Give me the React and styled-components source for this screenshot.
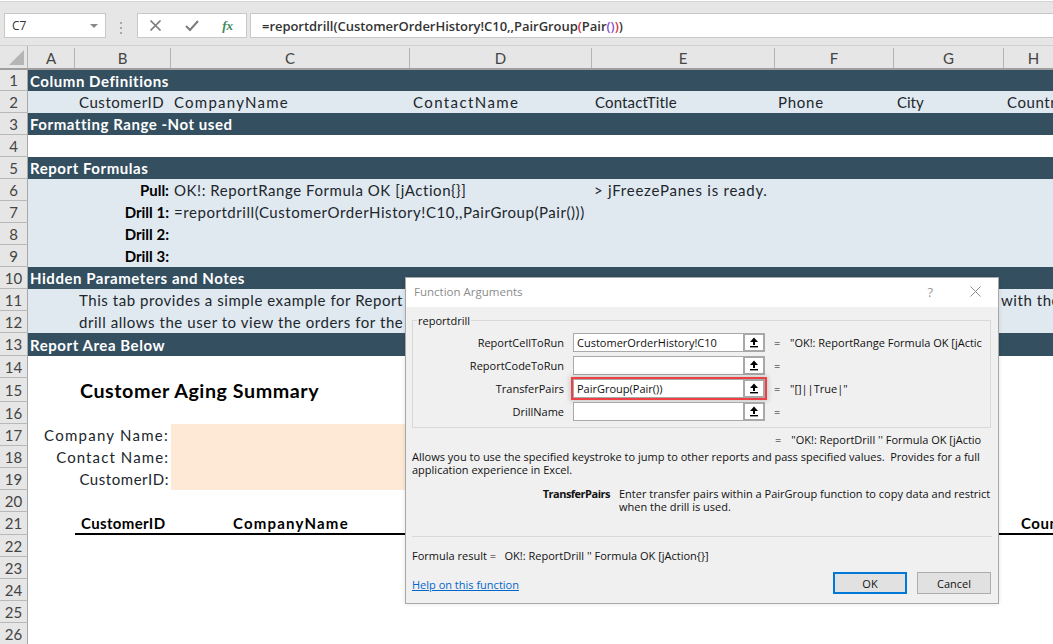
import React from 'react'
import styled, { createGlobalStyle } from 'styled-components'

const GlobalStyle = createGlobalStyle`
  html, body {
    margin: 0;
    height: 100%;
    overflow: hidden;
    background: #fff;
  }
`

const SHEET_FONT = `Lato, "Open Sans", sans-serif`
const UI_FONT = `"Open Sans", "Noto Sans", sans-serif`
const COLUMNS = '28px 47px 96px 239px 182px 183px 119px 110px 60px'

const Page = styled.div`
  position: relative;
  width: 1053px;
  height: 644px;
  overflow: hidden;
  background: #fff;
`

/* formula bar */
const Toolbar = styled.div`
  height: 45px;
  box-sizing: border-box;
  padding: 11px 0 0 4px;
  display: flex;
  align-items: flex-start;
  background: #e6e6e6;
  border-top: 1px solid #d4d4d4;
  margin-top: 1px;
  border-bottom: 1px solid #d0d0d0;
`
const NameBox = styled.div`
  width: 102px;
  height: 25px;
  box-sizing: border-box;
  padding: 0 7px;
  display: flex;
  align-items: center;
  justify-content: space-between;
  background: #fff;
  border: 1px solid #c8c8c8;
  font: 12px ${UI_FONT};
  color: #333;
`
const Caret = styled.span`
  width: 0;
  height: 0;
  border-left: 4px solid transparent;
  border-right: 4px solid transparent;
  border-top: 4px solid #888;
`
const Grip = styled.div`
  width: 3px;
  margin: 9px 14px 0 14px;
  display: flex;
  flex-direction: column;
  gap: 3px;
  span {
    width: 2px;
    height: 2px;
    background: #a8a8a8;
  }
`
const ButtonBox = styled.div`
  width: 110px;
  height: 25px;
  box-sizing: border-box;
  padding: 0 13px 0 11px;
  display: flex;
  align-items: center;
  justify-content: space-between;
  background: #fff;
  border: 1px solid #c8c8c8;
`
const FxMark = styled.span`
  font: italic bold 13px "Liberation Serif", serif;
  color: #3f8a5a;
`
const FormulaBox = styled.div`
  flex: 1;
  height: 25px;
  box-sizing: border-box;
  margin-left: 3px;
  padding: 0 11px;
  display: flex;
  align-items: center;
  background: #fff;
  border: 1px solid #c8c8c8;
  border-right: none;
  font: 600 13px ${UI_FONT};
  letter-spacing: -0.04px;
  color: #333;
  white-space: pre;
`
const Paren = styled.span`
  color: ${props => props.$color};
`

/* sheet */
const HeaderRow = styled.div`
  height: 24px;
  box-sizing: border-box;
  display: grid;
  grid-template-columns: ${COLUMNS};
  background: #e6e6e6;
  border-bottom: 2px solid #9f9f9f;
`
const Corner = styled.div`
  display: flex;
  align-items: flex-end;
  justify-content: flex-end;
  padding: 0 3px 3px 0;
  border-right: 1px solid #b4b4b4;
`
const ColHead = styled.div`
  display: flex;
  align-items: center;
  justify-content: center;
  margin-top: 2px;
  border-right: 1px solid #b4b4b4;
  font: 15px ${SHEET_FONT};
  color: #444;
`
const Row = styled.div`
  height: ${props => props.$height || 22}px;
  display: grid;
  grid-template-columns: ${COLUMNS};
  background: ${props =>
    props.$band === 'dark' ? '#344f5f' : props.$band === 'light' ? '#e1e9f0' : '#fff'};
`
const RowHead = styled.div`
  display: flex;
  align-items: center;
  justify-content: center;
  background: #e6e6e6;
  border-right: 1px solid #a8a8a8;
  border-bottom: 1px solid #b8b8b8;
  box-sizing: border-box;
  font: 15px ${SHEET_FONT};
  color: #444;
`
const Cell = styled.div`
  grid-column: ${props => props.$col};
  min-width: 0;
  display: flex;
  align-items: center;
  justify-content: ${props => (props.$right ? 'flex-end' : 'flex-start')};
  padding: ${props => (props.$right ? '0 2px 0 0' : `0 0 0 ${props.$indent ?? 3}px`)};
  background: ${props => props.$fill || 'transparent'};
  font: ${props => (props.$bold ? 700 : 400)} ${props => props.$size || 15}px ${SHEET_FONT};
  letter-spacing: ${props => props.$spacing ?? 0.55}px;
  color: ${props => props.$color || '#20262c'};
  white-space: nowrap;
`
const RuleCell = styled(Cell)`
  grid-column: 3 / -1;
  padding-left: 6px;
  align-items: flex-end;
  border-bottom: 2px solid #000;
  box-sizing: border-box;
  display: grid;
  grid-template-columns: 152px 788px auto;
  height: 23px;
  padding-bottom: 1px;
  color: #000;
`
const Wide = styled.span`
  letter-spacing: ${props => props.$spacing}px;
`

/* dialog */
const Dialog = styled.div`
  position: absolute;
  left: 405px;
  top: 277px;
  width: 594px;
  height: 327px;
  box-sizing: border-box;
  display: flex;
  flex-direction: column;
  background: #f0f0f0;
  border: 1px solid #a8a8a8;
  box-shadow: 0 0 4px rgba(0, 0, 0, 0.12);
  font: 11px ${UI_FONT};
  color: #111;
`
const TitleBar = styled.div`
  height: 29px;
  flex: none;
  padding: 0 17px 2px 8px;
  box-sizing: border-box;
  display: flex;
  align-items: center;
  background: #fff;
  color: #8c8c8c;
  font-size: 11.5px;
`
const Title = styled.span`
  flex: 1;
`
const HelpMark = styled.span`
  margin-right: 37px;
  font-size: 13px;
  color: #999;
`
const Group = styled.fieldset`
  margin: 7px 7px 0 6px;
  padding: 6px 0 0;
  height: 114px;
  box-sizing: border-box;
  border: 1px solid #d9d9d9;
  min-width: 0;
`
const Legend = styled.legend`
  margin-left: 4px;
  padding: 0 1px;
  line-height: 13px;
`
const ArgRow = styled.div`
  height: 19px;
  margin-bottom: 4px;
  display: grid;
  grid-template-columns: 151px 192px 7px auto;
  align-items: center;
  column-gap: 9px;
`
const ArgLabel = styled.span`
  text-align: right;
`
const InputWrap = styled.div`
  display: flex;
  height: 19px;
  width: 192px;
  box-shadow: ${props =>
    props.$active ? '0 0 0 2px #ee3f45, 0 0 5px 3px rgba(0,0,0,.18)' : 'none'};
`
const ArgInput = styled.div`
  flex: 1;
  box-sizing: border-box;
  padding: 0 3px;
  display: flex;
  align-items: center;
  background: #fff;
  border: 1px solid #a9a9a9;
  border-right: none;
`
const PickButton = styled.div`
  width: 22px;
  flex: none;
  box-sizing: border-box;
  display: flex;
  align-items: center;
  justify-content: center;
  background: #fff;
  border: 2px solid #a8a8a8;
`
const ArgValue = styled.span`
  white-space: pre;
  overflow: hidden;
  max-width: 192px;
`
const ResultLine = styled.div`
  height: 16px;
  margin: 4px 0 0 369px;
  display: flex;
  gap: 10px;
  white-space: pre;
`
const Description = styled.div`
  margin: 2px 7px 0 6px;
  line-height: 13px;
  white-space: nowrap;
`
const ArgHelp = styled.div`
  margin: 11px 2px 0 0;
  display: grid;
  grid-template-columns: 204px 1fr;
  column-gap: 9px;
  line-height: 13px;
  white-space: nowrap;
`
const ArgHelpName = styled.b`
  text-align: right;
  letter-spacing: -0.5px;
`
const Divider = styled.div`
  height: 1px;
  margin: 23px 6px 0 6px;
  background: #d9d9d9;
`
const FormulaResult = styled.div`
  margin: 12px 6px 0;
  line-height: 14px;
`
const Footer = styled.div`
  margin: 9px 7px 0 6px;
  display: flex;
  align-items: center;
`
const HelpLink = styled.a`
  flex: 1;
  padding-top: 2px;
  color: #0066cc;
  text-decoration: underline;
`
const Button = styled.div`
  width: 74px;
  height: 22px;
  box-sizing: border-box;
  margin-left: 10px;
  display: flex;
  align-items: center;
  justify-content: center;
  background: #e1e1e1;
  border: ${props => (props.$primary ? '2px solid #0078d7' : '1px solid #adadad')};
`

const ArrowIcon = () => (
  <svg width="10" height="11" viewBox="0 0 10 11">
    <path d="M5 0.5 L9 5 H6 V8 H4 V5 H1 Z" fill="#000" />
    <rect x="1" y="9" width="8" height="1.4" fill="#000" />
  </svg>
)

const args = [
  { name: 'ReportCellToRun', input: 'CustomerOrderHistory!C10', value: '"OK!: ReportRange Formula OK [jActic' },
  { name: 'ReportCodeToRun', input: '', value: '' },
  { name: 'TransferPairs', input: 'PairGroup(Pair())', value: '"[]||True|"', active: true },
  { name: 'DrillName', input: '', value: '' },
]

const columnNames = [
  { col: 3, text: 'CustomerID', indent: 4 },
  { col: 4, text: 'CompanyName', spacing: 1.25 },
  { col: 5, text: 'ContactName', spacing: 1.4 },
  { col: 6, text: 'ContactTitle', spacing: 0.15 },
  { col: 7, text: 'Phone', spacing: 0.75 },
  { col: 8, text: 'City', spacing: 0 },
  { col: 9, text: 'Country' },
]

const App = () => {
  const band = (n, title, height) => (
    <Row $band="dark" $height={height}>
      <RowHead>{n}</RowHead>
      <Cell $col="2 / -1" $bold $color="#fff" $indent={2}>{title}</Cell>
    </Row>
  )
  const drill = (n, label, text) => (
    <Row $band="light">
      <RowHead>{n}</RowHead>
      <Cell $col="3" $right $bold $color="#000" $spacing={0}>{label}</Cell>
      {text && <Cell $col="4 / 6">{text}</Cell>}
      {n === 6 && <Cell $col="6 / -1" $indent={2} $spacing={0.75}>&gt; jFreezePanes is ready.</Cell>}
    </Row>
  )

  return (
    <Page>
      <GlobalStyle />
      <Toolbar>
        <NameBox>C7<Caret /></NameBox>
        <Grip><span /><span /><span /></Grip>
        <ButtonBox>
          <svg width="13" height="13" viewBox="0 0 13 13">
            <path d="M1.5 1.5 L11.5 11.5 M11.5 1.5 L1.5 11.5" stroke="#7a7a7a" strokeWidth="1.7" fill="none" />
          </svg>
          <svg width="14" height="13" viewBox="0 0 14 13">
            <path d="M1 7 L5 11 L13 2" stroke="#7a7a7a" strokeWidth="1.9" fill="none" />
          </svg>
          <FxMark>fx</FxMark>
        </ButtonBox>
        <FormulaBox>
          =reportdrill(CustomerOrderHistory!C10,,PairGroup
          <Paren $color="#d0343c">(</Paren>Pair
          <Paren $color="#8a4fd0">()</Paren>
          <Paren $color="#d0343c">)</Paren>)
        </FormulaBox>
      </Toolbar>

      <HeaderRow>
        <Corner>
          <svg width="15" height="15" viewBox="0 0 15 15"><path d="M15 0 V15 H0 Z" fill="#b5b5b5" /></svg>
        </Corner>
        {['A', 'B', 'C', 'D', 'E', 'F', 'G', 'H'].map(c => <ColHead key={c}>{c}</ColHead>)}
      </HeaderRow>

      {band(1, 'Column Definitions', 21)}
      <Row $band="light">
        <RowHead>2</RowHead>
        {columnNames.map(c => (
          <Cell key={c.text} $col={c.col} $spacing={c.spacing} $indent={c.indent}>{c.text}</Cell>
        ))}
      </Row>
      {band(3, 'Formatting Range -Not used')}
      <Row><RowHead>4</RowHead></Row>
      {band(5, 'Report Formulas')}
      {drill(6, 'Pull:', 'OK!: ReportRange Formula OK [jAction{}]')}
      {drill(7, 'Drill 1:', '=reportdrill(CustomerOrderHistory!C10,,PairGroup(Pair()))')}
      {drill(8, 'Drill 2:')}
      {drill(9, 'Drill 3:')}
      {band(10, 'Hidden Parameters and Notes')}
      <Row $band="light">
        <RowHead>11</RowHead>
        <Cell $col="3 / 6" $indent={4}>This tab provides a simple example for Report</Cell>
        <Cell $col="8 / -1" $indent={107}>with the</Cell>
      </Row>
      <Row $band="light">
        <RowHead>12</RowHead>
        <Cell $col="3 / 6" $indent={4}>drill allows the user to view the orders for the</Cell>
      </Row>
      {band(13, 'Report Area Below', 23)}
      <Row><RowHead>14</RowHead></Row>
      <Row $height={24}>
        <RowHead>15</RowHead>
        <Cell $col="3 / 6" $bold $size={19.7} $color="#000" $indent={5}>Customer Aging Summary</Cell>
      </Row>
      <Row><RowHead>16</RowHead></Row>
      <Row>
        <RowHead>17</RowHead>
        <Cell $col="2 / 4" $right $spacing={1.25}>Company Name:</Cell>
        <Cell $col="4" $fill="#fde9d5" />
      </Row>
      <Row>
        <RowHead>18</RowHead>
        <Cell $col="2 / 4" $right $spacing={1.1}>Contact Name:</Cell>
        <Cell $col="4" $fill="#fde9d5" />
      </Row>
      <Row>
        <RowHead>19</RowHead>
        <Cell $col="2 / 4" $right>CustomerID:</Cell>
        <Cell $col="4" $fill="#fde9d5" />
      </Row>
      <Row><RowHead>20</RowHead></Row>
      <Row $height={23}>
        <RowHead>21</RowHead>
        <RuleCell $bold>
          <Wide $spacing={0.35}>CustomerID</Wide>
          <Wide $spacing={1.2}>CompanyName</Wide>
          <span>Country</span>
        </RuleCell>
      </Row>
      {[22, 23, 24, 25, 26].map(n => (
        <Row key={n}><RowHead>{n}</RowHead></Row>
      ))}

      <Dialog>
        <TitleBar>
          <Title>Function Arguments</Title>
          <HelpMark>?</HelpMark>
          <svg width="11" height="11" viewBox="0 0 11 11">
            <path d="M0.5 0.5 L10.5 10.5 M10.5 0.5 L0.5 10.5" stroke="#8c8c8c" strokeWidth="1" fill="none" />
          </svg>
        </TitleBar>
        <Group>
          <Legend>reportdrill</Legend>
          {args.map(a => (
            <ArgRow key={a.name}>
              <ArgLabel>{a.name}</ArgLabel>
              <InputWrap $active={a.active}>
                <ArgInput>{a.input}</ArgInput>
                <PickButton><ArrowIcon /></PickButton>
              </InputWrap>
              <span>=</span>
              <ArgValue>{a.value}</ArgValue>
            </ArgRow>
          ))}
        </Group>
        <ResultLine><span>=</span><span>"OK!: ReportDrill '' Formula OK [jActio</span></ResultLine>
        <Description>
          Allows you to use the specified keystroke to jump to other reports and pass specified values.&nbsp; Provides for a full<br />
          application experience in Excel.
        </Description>
        <ArgHelp>
          <ArgHelpName>TransferPairs</ArgHelpName>
          <span>Enter transfer pairs within a PairGroup function to copy data and restrict<br />when the drill is used.</span>
        </ArgHelp>
        <Divider />
        <FormulaResult>Formula result =&nbsp;&nbsp; OK!: ReportDrill '' Formula OK [jAction{'{}'}]</FormulaResult>
        <Footer>
          <HelpLink>Help on this function</HelpLink>
          <Button $primary>OK</Button>
          <Button>Cancel</Button>
        </Footer>
      </Dialog>
    </Page>
  )
}

export default App
